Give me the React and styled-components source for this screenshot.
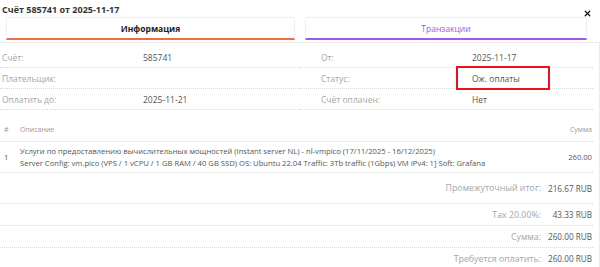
import React from "react";
import styled, { createGlobalStyle } from "styled-components";
import { X } from "lucide-react";

// Page reset and base font
const GlobalStyle = createGlobalStyle`
  body {
    margin: 0;
    background: #ffffff;
    font-family: "Open Sans", "Noto Sans", sans-serif;
    color: #555;
  }
`;

const Modal = styled.div`
  width: 600px;
  height: 267px;
  overflow: hidden;
  background: #fff;
`;

// Title bar with close button
const Header = styled.div`
  display: flex;
  justify-content: space-between;
  align-items: center;
  height: 17px;
  padding: 0 8px 0 2px;
`;

const Title = styled.h1`
  margin: 0;
  margin-top: 1px;
  font-size: 9px;
  font-weight: 700;
  color: #333;
`;

const CloseButton = styled.button`
  display: flex;
  border: 0;
  background: none;
  padding: 0;
  margin-top: 9px;
  color: #111;
  cursor: pointer;
`;

// Tabs row
const Tabs = styled.div`
  display: grid;
  grid-template-columns: 289px 282px;
  column-gap: 10px;
  padding-left: 6px;
`;

const Tab = styled.div`
  height: 20px;
  display: flex;
  align-items: center;
  justify-content: center;
  border: 1px solid #f0f0f0;
  border-bottom: 2px solid ${(p) => p.$accent};
  border-radius: 2px 2px 0 0;
  font-size: 8.5px;
  font-weight: ${(p) => (p.$active ? 700 : 500)};
  color: ${(p) => (p.$active ? "#222" : p.$accent)};
  box-shadow: 0 -1px 2px rgba(0, 0, 0, 0.03);
`;

// Main content panel
const Panel = styled.div`
  margin-top: 2px;
  border-top: 1px solid #eaeaea;
  border-right: 1px solid #eaeaea;
  padding: 4px 6px 0 0;
  height: 240px;
`;

const InfoGrid = styled.div`
  display: grid;
  grid-template-columns: 300px 1fr;
`;

const InfoColumn = styled.div`
  display: flex;
  flex-direction: column;
`;

const InfoRow = styled.div`
  display: grid;
  grid-template-columns: ${(p) => p.$labelWidth}px 1fr;
  height: 20px;
  border-bottom: 1px dotted #d8d8d8;
`;

const Label = styled.div`
  display: flex;
  align-items: center;
  padding-left: ${(p) => p.$indent}px;
  font-size: 8.5px;
  color: #a6a6a6;
`;

const Value = styled.div`
  display: flex;
  align-items: center;
  padding-left: 14px;
  font-size: 8.5px;
  color: #555;
  width: ${(p) => (p.$highlight ? "94px" : "auto")};
  box-sizing: border-box;
  border: 2px solid ${(p) => (p.$highlight ? "#e8121b" : "transparent")};
  margin: -2px 0;
  height: 24px;
  position: relative;
  z-index: 1;
`;

// Line items table
const Table = styled.div`
  margin-top: 9px;
  display: flex;
  flex-direction: column;
`;

const TableRow = styled.div`
  display: grid;
  grid-template-columns: 20px 1fr 60px;
  align-items: center;
  min-height: ${(p) => p.$height}px;
  border-bottom: 1px dotted #d8d8d8;
  padding-right: 1px;
  font-size: ${(p) => (p.$head ? "7px" : "7.65px")};
  color: ${(p) => (p.$head ? "#999" : "#555")};
`;

const Cell = styled.div`
  padding-left: ${(p) => (p.$first ? 4 : 0)}px;
  text-align: ${(p) => (p.$right ? "right" : "left")};
  line-height: 12px;
`;

// Totals block
const Totals = styled.div`
  display: flex;
  flex-direction: column;
`;

const TotalRow = styled.div`
  display: flex;
  justify-content: flex-end;
  align-items: center;
  height: ${(p) => (p.$first ? 30 : 21)}px;
  border-bottom: ${(p) => (p.$last ? "none" : "1px dotted #d8d8d8")};
  padding-right: 1px;
  font-size: 8.8px;
`;

const TotalLabel = styled.span`
  color: #a6a6a6;
`;

const TotalValue = styled.span`
  width: 46px;
  margin-left: 5px;
  font-size: 8.2px;
  text-align: right;
  color: #555;
`;

const leftRows = [
  { label: "Счёт:", value: "585741" },
  { label: "Плательщик:", value: "" },
  { label: "Оплатить до:", value: "2025-11-21" },
];

const rightRows = [
  { label: "От:", value: "2025-11-17" },
  { label: "Статус:", value: "Ож. оплаты", highlight: true },
  { label: "Счёт оплачен:", value: "Нет" },
];

const totals = [
  ["Промежуточный итог:", "216.67 RUB"],
  ["Tax 20.00%:", "43.33 RUB"],
  ["Сумма:", "260.00 RUB"],
  ["Требуется оплатить:", "260.00 RUB"],
];

const App = () => {
  return (
    <>
      <GlobalStyle />
      <Modal>
        <Header>
          <Title>Счёт 585741 от 2025-11-17</Title>
          <CloseButton aria-label="Закрыть">
            <X size={9} strokeWidth={3.2} />
          </CloseButton>
        </Header>

        <Tabs>
          <Tab $active $accent="#f26a45">Информация</Tab>
          <Tab $accent="#a259e6">Транзакции</Tab>
        </Tabs>

        <Panel>
          <InfoGrid>
            <InfoColumn>
              {leftRows.map((r) => (
                <InfoRow key={r.label} $labelWidth={127}>
                  <Label $indent={2}>{r.label}</Label>
                  <Value>{r.value}</Value>
                </InfoRow>
              ))}
            </InfoColumn>
            <InfoColumn>
              {rightRows.map((r) => (
                <InfoRow key={r.label} $labelWidth={156}>
                  <Label $indent={21}>{r.label}</Label>
                  <Value $highlight={r.highlight}>{r.value}</Value>
                </InfoRow>
              ))}
            </InfoColumn>
          </InfoGrid>

          <Table>
            <TableRow $head $height={22}>
              <Cell $first>#</Cell>
              <Cell>Описание</Cell>
              <Cell $right>Сумма</Cell>
            </TableRow>
            <TableRow $height={30}>
              <Cell $first>1</Cell>
              <Cell>
                Услуги по предоставлению вычислительных мощностей (Instant server NL) - nl-vmpico (17/11/2025 - 16/12/2025)
                <br />
                Server Config: vm.pico (VPS / 1 vCPU / 1 GB RAM / 40 GB SSD) OS: Ubuntu 22.04 Traffic: 3Tb traffic (1Gbps) VM IPv4: 1] Soft: Grafana
              </Cell>
              <Cell $right>260.00</Cell>
            </TableRow>
          </Table>

          <Totals>
            {totals.map(([label, value], i) => (
              <TotalRow
                key={label}
                $first={i === 0}
                $last={i === totals.length - 1}
              >
                <TotalLabel>{label}</TotalLabel>
                <TotalValue>{value}</TotalValue>
              </TotalRow>
            ))}
          </Totals>
        </Panel>
      </Modal>
    </>
  );
};

export default App;
